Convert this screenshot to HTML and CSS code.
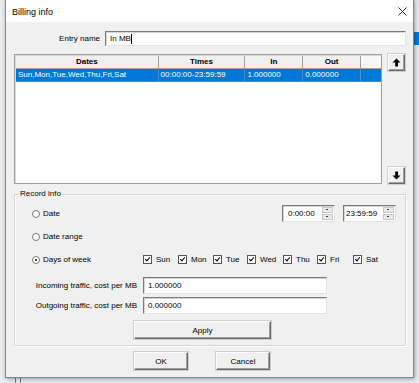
FILE: index.html
```html
<!DOCTYPE html>
<html>
<head>
<meta charset="utf-8">
<link rel="stylesheet" href="styles.css">
</head>
<body>
<div class="desktop">
  <div class="bg-sel"></div>
  <div class="bg-lines"></div>
  <div class="window">
    <div class="titlebar">
      <span class="title">Billing info</span>
      <svg class="close" width="9" height="9" viewBox="0 0 9 9"><path d="M0.5 0.5L8.5 8.5M8.5 0.5L0.5 8.5" stroke="#333" stroke-width="1"/></svg>
    </div>
    <div class="body">
      <div class="entry-row">
        <label class="entry-label">Entry name</label>
        <div class="field entry-field">In MB<span class="caret"></span></div>
      </div>
      <div class="list-row">
        <div class="listbox">
          <div class="lrow head">
            <div class="c c1">Dates</div>
            <div class="c c2">Times</div>
            <div class="c c3">In</div>
            <div class="c c4">Out</div>
            <div class="c c5"></div>
          </div>
          <div class="lrow sel">
            <div class="c c1">Sun,Mon,Tue,Wed,Thu,Fri,Sat</div>
            <div class="c c2">00:00:00-23:59:59</div>
            <div class="c c3">1.000000</div>
            <div class="c c4">0.000000</div>
            <div class="c c5"></div>
          </div>
        </div>
        <div class="arrows">
          <div class="btn sq"><svg width="9" height="9" viewBox="0 0 9 9"><path d="M4.5 0.5L8.5 4.5H6V8.5H3.2V4.5H0.5Z" fill="#000"/></svg></div>
          <div class="btn sq"><svg width="9" height="9" viewBox="0 0 9 9"><path d="M4.5 8.5L8.5 4.5H6V0.5H3.2V4.5H0.5Z" fill="#000"/></svg></div>
        </div>
      </div>
      <fieldset class="group">
        <legend>Record info</legend>
        <div class="grow r1">
          <div class="radio-item"><span class="radio"></span>Date</div>
          <div class="times">
            <div class="field tfield"><span class="tval">0:00:00</span><span class="spin"><span class="sb up"></span><span class="sb dn"></span></span></div>
            <div class="field tfield t2"><span class="tval">23:59:59</span><span class="spin"><span class="sb up"></span><span class="sb dn"></span></span></div>
          </div>
        </div>
        <div class="grow r2">
          <div class="radio-item"><span class="radio"></span>Date range</div>
        </div>
        <div class="grow r3">
          <div class="radio-item wk"><span class="radio on"></span>Days of week</div>
          <div class="days">
            <div class="chk-item"><span class="chk"></span>Sun</div>
            <div class="chk-item"><span class="chk"></span>Mon</div>
            <div class="chk-item"><span class="chk"></span>Tue</div>
            <div class="chk-item"><span class="chk"></span>Wed</div>
            <div class="chk-item"><span class="chk"></span>Thu</div>
            <div class="chk-item"><span class="chk"></span>Fri</div>
            <div class="chk-item"><span class="chk"></span>Sat</div>
          </div>
        </div>
        <div class="cost-grid">
          <label class="cost-label">Incoming traffic, cost per MB</label>
          <div class="field cost-field">1.000000</div>
          <label class="cost-label">Outgoing traffic, cost per MB</label>
          <div class="field cost-field">0.000000</div>
        </div>
        <div class="btn apply">Apply</div>
      </fieldset>
      <div class="footer">
        <div class="btn fbtn">OK</div>
        <div class="btn fbtn">Cancel</div>
      </div>
    </div>
  </div>
</div>
</body>
</html>
```
FILE: styles.css
```css
html, body {
  margin: 0;
  padding: 0;
}
body {
  width: 419px;
  height: 383px;
  overflow: hidden;
  font-family: "Liberation Sans", Arial, sans-serif;
  font-size: 8px;
  color: #000;
}
.desktop {
  position: relative;
  width: 419px;
  height: 383px;
  background: #e9ecef;
  overflow: hidden;
}
.bg-sel {
  position: absolute;
  left: 414px;
  top: 32px;
  width: 10px;
  height: 13px;
  background: #0078d7;
}
.bg-lines {
  position: absolute;
  left: 15px;
  top: 377px;
  width: 4px;
  height: 10px;
  border-left: 1px solid #777;
  border-right: 1px solid #777;
}
.window {
  position: absolute;
  left: 5px;
  top: -1px;
  width: 409px;
  height: 379px;
  box-sizing: border-box;
  border: 1px solid #858585;
  background: #f0f0f0;
  box-shadow: 1px 1px 4px rgba(0, 0, 0, 0.35);
  display: flex;
  flex-direction: column;
}
.titlebar {
  height: 22px;
  background: #fff;
  display: flex;
  align-items: center;
  justify-content: space-between;
  padding: 0 6px 0 6px;
  flex: none;
}
.title {
  font-size: 9px;
  color: #000;
  padding-top: 1px;
}
.close {
  margin-right: 0;
}
.body {
  padding: 0 7px 0 8px;
}
.field {
  box-sizing: border-box;
  background: #fff;
  border-top: 1px solid #7a7a7a;
  border-left: 1px solid #7a7a7a;
  border-right: 1px solid #e3e3e3;
  border-bottom: 1px solid #e3e3e3;
  box-shadow: inset 1px 1px 0 #d4d4d4;
  display: flex;
  align-items: center;
  padding-left: 4px;
}
.entry-row {
  display: flex;
  align-items: center;
  justify-content: flex-end;
  gap: 5px;
  margin-top: 9px;
}
.entry-field {
  width: 301px;
  height: 15px;
}
.caret {
  display: inline-block;
  width: 1px;
  height: 10px;
  background: #000;
}
.list-row {
  display: flex;
  margin-top: 8px;
}
.listbox {
  box-sizing: border-box;
  width: 368px;
  height: 130px;
  background: #fff;
  border: 1px solid #a0a0a0;
  box-shadow: inset 1px 1px 0 #dadada;
  padding: 1px 0 0 1px;
}
.lrow {
  display: flex;
  height: 13px;
}
.c {
  box-sizing: border-box;
  height: 13px;
  line-height: 12px;
  white-space: nowrap;
  overflow: hidden;
  border-right: 1px solid #a9a9a9;
}
.c1 { width: 143px; }
.c2 { width: 87px; }
.c3 { width: 58px; }
.c4 { width: 58px; }
.c5 { width: 20px; border-right: none; }
.head .c {
  background: #f0f0f0;
  font-weight: bold;
  text-align: center;
  border-bottom: 1px solid #a0a0a0;
  border-right: 1px solid #a0a0a0;
}
.head .c5 {
  border-right: none;
  background: #f7f7f7;
}
.sel {
  background: #0078d7;
  color: #fff;
}
.sel .c {
  padding-left: 2px;
  border-right: 1px solid #4a8ac4;
  border-bottom: 1px solid #4a8ac4;
}
.sel .c5 { border-right: none; }
.arrows {
  margin-left: 6px;
  display: flex;
  flex-direction: column;
  justify-content: space-between;
  height: 130px;
}
.btn {
  box-sizing: border-box;
  background: #f0f0f0;
  border-top: 1px solid #fff;
  border-left: 1px solid #fff;
  border-right: 1px solid #696969;
  border-bottom: 1px solid #696969;
  box-shadow: inset -1px -1px 0 #a0a0a0, 0 0 0 0 transparent;
  outline: 1px solid #cfcfcf;
  display: flex;
  align-items: center;
  justify-content: center;
}
.sq {
  width: 17px;
  height: 17px;
}
.group {
  margin: 5px 0 0 0;
  padding: 0 0 6px 0;
  border: 1px solid #d5d5d5;
  box-shadow: inset 1px 1px 0 #fff, 1px 1px 0 #fff;
  min-width: 0;
}
.group legend {
  margin-left: 4px;
  padding: 0 1px;
  line-height: 10px;
  height: 10px;
}
.grow {
  display: flex;
  align-items: center;
  height: 17px;
  padding-left: 17px;
}
.r1 { margin-top: 6px; }
.r2 { margin-top: 6px; }
.r3 { margin-top: 6px; }
.radio-item {
  display: flex;
  align-items: center;
  gap: 3px;
}
.radio {
  box-sizing: border-box;
  width: 8px;
  height: 8px;
  border-radius: 50%;
  border: 1px solid #777;
  background: #fff;
  position: relative;
}
.radio.on::after {
  content: "";
  position: absolute;
  left: 2px;
  top: 2px;
  width: 2px;
  height: 2px;
  border-radius: 50%;
  background: #000;
}
.wk {
  width: 111px;
}
.times {
  margin-left: auto;
  margin-right: 9px;
  display: flex;
  gap: 8px;
}
.tfield {
  width: 53px;
  height: 17px;
  padding-left: 5px;
  justify-content: space-between;
  padding-right: 1px;
}
.t2 { padding-left: 2px; }
.spin {
  display: flex;
  flex-direction: column;
  width: 11px;
  height: 13px;
  gap: 1px;
}
.sb {
  flex: 1;
  background: #e8e8e8;
  border: 1px solid #c8c8c8;
  position: relative;
}
.sb::after {
  content: "";
  position: absolute;
  left: 3px;
  top: 1px;
  width: 2px;
  height: 1px;
  background: #444;
}
.days {
  display: grid;
  grid-template-columns: 35px 35px 34px 36px 34px 36px auto;
}
.chk-item {
  display: flex;
  align-items: center;
  gap: 4px;
}
.chk {
  box-sizing: border-box;
  width: 9px;
  height: 9px;
  border: 1px solid #555;
  background: #fff;
  position: relative;
}
.chk::after {
  content: "";
  position: absolute;
  left: 2px;
  top: 0px;
  width: 2px;
  height: 4px;
  border-right: 1.5px solid #000;
  border-bottom: 1.5px solid #000;
  transform: rotate(40deg);
}
.cost-grid {
  display: grid;
  grid-template-columns: 122px 184px;
  column-gap: 6px;
  row-gap: 3px;
  margin-top: 9px;
  align-items: center;
}
.cost-label {
  text-align: right;
  white-space: nowrap;
}
.cost-field {
  height: 17px;
}
.apply {
  width: 137px;
  height: 18px;
  margin: 7px 0 0 119px;
}
.footer {
  display: flex;
  gap: 28px;
  margin: 6px 0 0 120px;
}
.fbtn {
  width: 54px;
  height: 18px;
}
```
